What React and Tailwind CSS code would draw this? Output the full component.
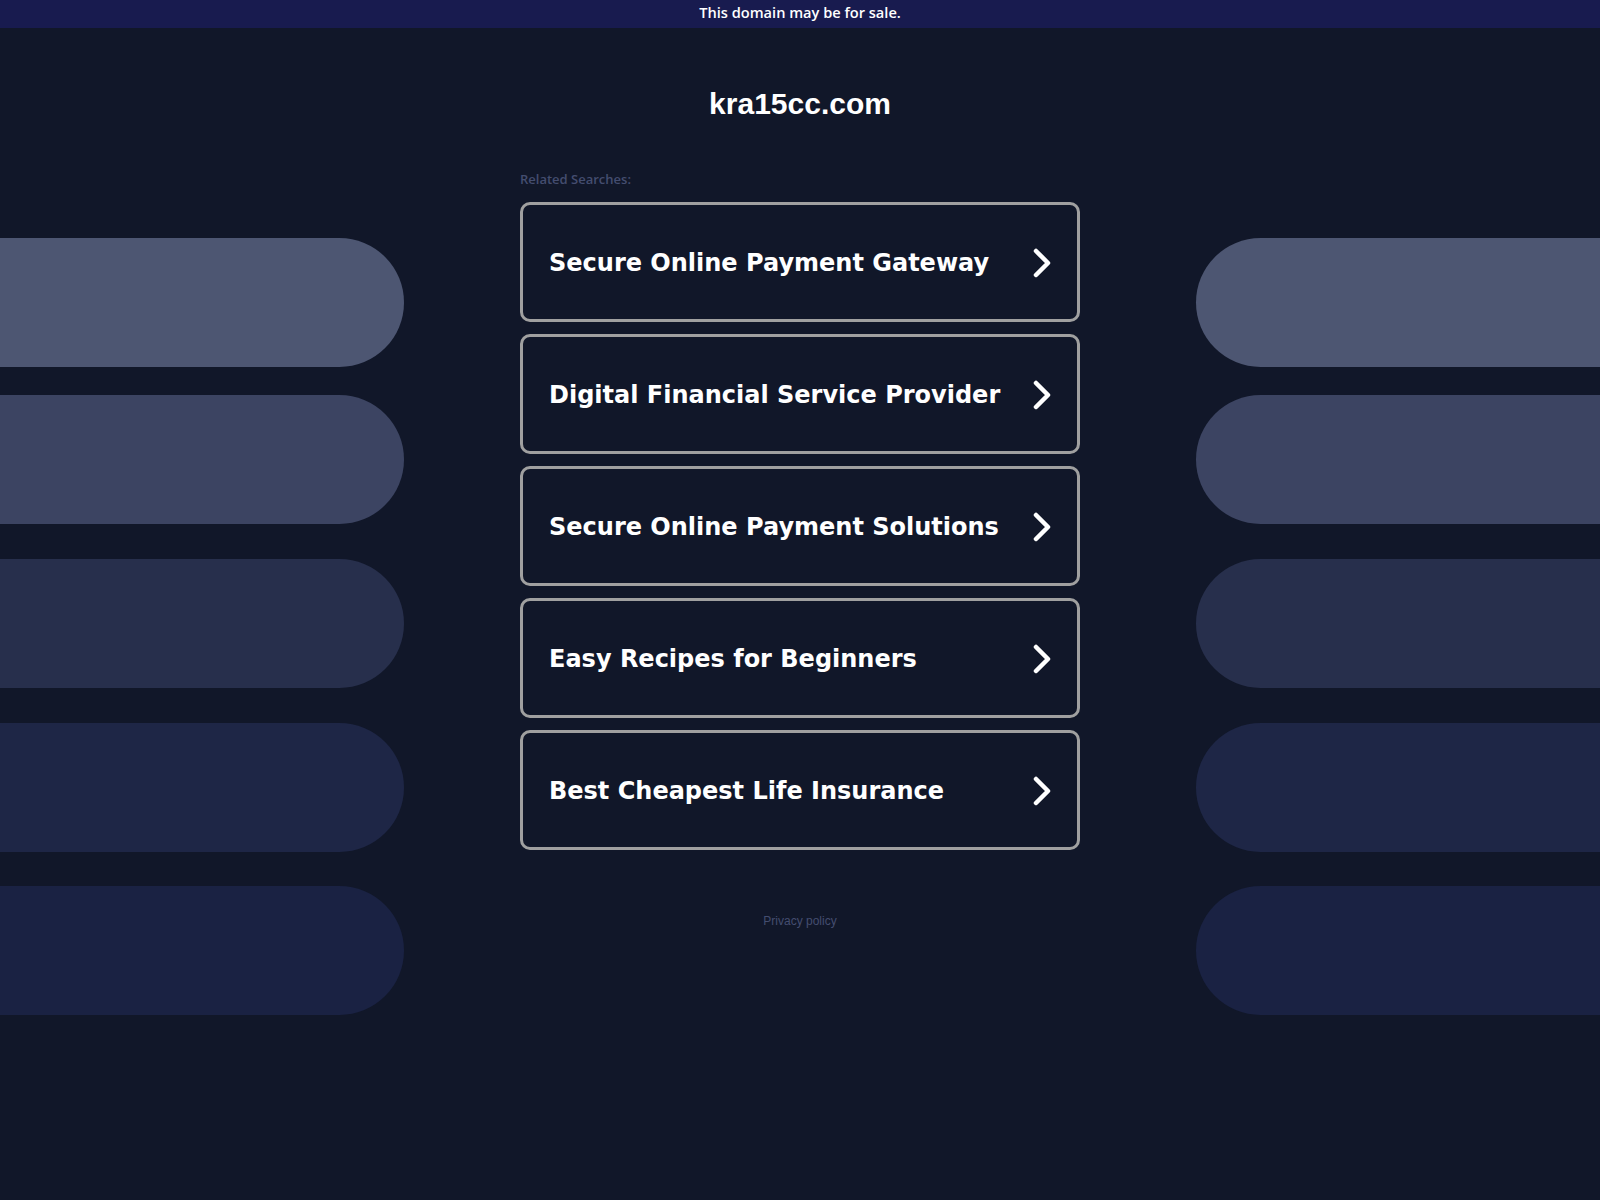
const searches = [
  'Secure Online Payment Gateway',
  'Digital Financial Service Provider',
  'Secure Online Payment Solutions',
  'Easy Recipes for Beginners',
  'Best Cheapest Life Insurance',
];

function Pills({ side }) {
  const round = side === 'left' ? 'rounded-r-full' : 'rounded-l-full';
  return (
    <div className="flex w-[404px] shrink-0 flex-col pt-[210px]">
      <div className={`h-[129px] bg-[#4d5672] ${round}`} />
      <div className={`mt-[28px] h-[129px] bg-[#3c4462] ${round}`} />
      <div className={`mt-[35px] h-[129px] bg-[#272f4c] ${round}`} />
      <div className={`mt-[35px] h-[129px] bg-[#1e2646] ${round}`} />
      <div className={`mt-[34px] h-[129px] bg-[#1a2243] ${round}`} />
    </div>
  );
}

function Chevron() {
  return (
    <svg width="22" height="30" viewBox="0 0 22 30" fill="none">
      <polyline points="5,3 17,15 5,27" stroke="white" strokeWidth="4.5" strokeLinecap="round" strokeLinejoin="round" />
    </svg>
  );
}

export default function App() {
  return (
    <div className="min-h-[1200px] w-full bg-[#111729]">
      <div className="flex h-7 items-center justify-center bg-[#181b4f] pb-[3px] text-[14.6px] font-semibold text-white" style={{ fontFamily: '"Open Sans", sans-serif' }}>
        This domain may be for sale.
      </div>
      <div className="flex justify-between">
        <Pills side="left" />
        <div className="flex w-[560px] shrink-0 flex-col">
          <h1 className="mt-[58px] text-center text-[30px] font-bold leading-9 text-white" style={{ fontFamily: '"Liberation Sans", Arial, sans-serif' }}>
            kra15cc.com
          </h1>
          <div className="mt-[49px] text-[13px] font-semibold leading-4 text-[#444d6f]" style={{ fontFamily: '"Open Sans", sans-serif' }}>
            Related Searches:
          </div>
          <div className="mt-[15px] flex flex-col gap-3">
            {searches.map((s) => (
              <div key={s} className="flex h-[120px] items-center justify-between rounded-[10px] border-[3px] border-[#a0a0a0] pb-0 pl-[26px] pr-[24px] pt-[2px]">
                <span className="text-[24px] font-bold text-white" style={{ fontFamily: '"DejaVu Sans", Verdana, sans-serif' }}>{s}</span>
                <Chevron />
              </div>
            ))}
          </div>
          <div className="mt-[64px] text-center text-[12px] leading-[14px] text-[#444d6f]" style={{ fontFamily: '"Liberation Sans", Arial, sans-serif' }}>
            Privacy policy
          </div>
        </div>
        <Pills side="right" />
      </div>
    </div>
  );
}
